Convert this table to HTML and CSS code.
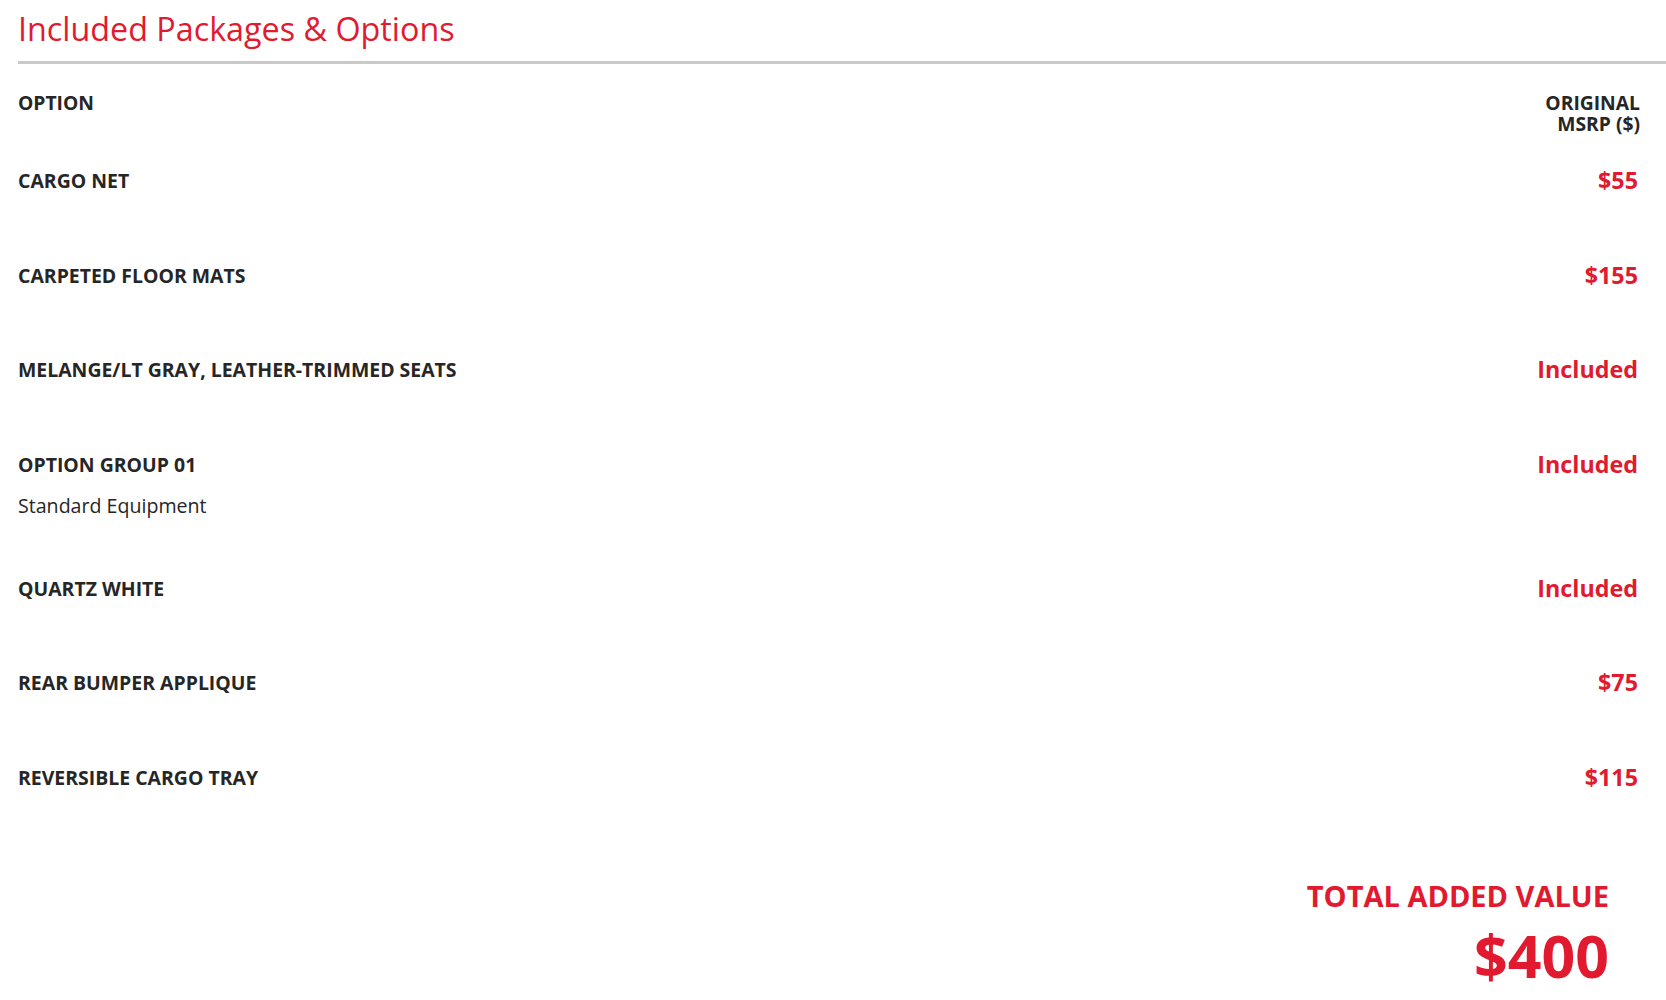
FILE: index.html
```html
<!DOCTYPE html>
<html lang="en">
<head>
<meta charset="utf-8">
<title>Included Packages &amp; Options</title>
<link rel="stylesheet" href="styles.css">
</head>
<body>
<div class="page">
  <h2 class="title">Included Packages &amp; Options</h2>
  <div class="rule"></div>
  <div class="table">
    <div class="head">
      <div class="head-option">OPTION</div>
      <div class="head-price">
        <div class="head-line">ORIGINAL</div>
        <div class="head-line">MSRP ($)</div>
      </div>
    </div>
    <div class="row">
      <div class="name">CARGO NET</div>
      <div class="price">$55</div>
    </div>
    <div class="row">
      <div class="name">CARPETED FLOOR MATS</div>
      <div class="price">$155</div>
    </div>
    <div class="row">
      <div class="name">MELANGE/LT GRAY, LEATHER-TRIMMED SEATS</div>
      <div class="price">Included</div>
    </div>
    <div class="row">
      <div class="name">OPTION GROUP 01
        <div class="desc">Standard Equipment</div>
      </div>
      <div class="price">Included</div>
    </div>
    <div class="row">
      <div class="name">QUARTZ WHITE</div>
      <div class="price">Included</div>
    </div>
    <div class="row">
      <div class="name">REAR BUMPER APPLIQUE</div>
      <div class="price">$75</div>
    </div>
    <div class="row">
      <div class="name">REVERSIBLE CARGO TRAY</div>
      <div class="price">$115</div>
    </div>
    <div class="total">
      <div class="total-label">TOTAL ADDED VALUE</div>
      <div class="total-value">$400</div>
    </div>
  </div>
</div>
</body>
</html>
```
FILE: styles.css
```css
html, body {
  margin: 0;
  padding: 0;
  background: #ffffff;
}
body {
  font-family: "Open Sans", "Liberation Sans", sans-serif;
  color: #262626;
}
.page {
  padding-left: 18px;
}
.title {
  margin: 8px 0 0 0;
  font-size: 32.3px;
  line-height: 40px;
  font-weight: 400;
  color: #e11a2f;
}
.rule {
  margin-top: 13px;
  height: 3px;
  background: #c9c9c9;
}
.table {
  margin-right: 26px;
}
.head {
  display: flex;
  justify-content: space-between;
  align-items: flex-start;
  padding-top: 28px;
  padding-bottom: 23px;
  font-size: 19.3px;
  line-height: 21px;
  font-weight: 700;
  color: #262626;
}
.head-price {
  text-align: right;
}
.head-line {
  height: 21px;
}
.row {
  display: flex;
  justify-content: space-between;
  align-items: flex-start;
  box-sizing: border-box;
  min-height: 94.5px;
  padding: 12px 0 47px 0;
}
.name {
  font-size: 19.45px;
  line-height: 24px;
  font-weight: 700;
  color: #262626;
}
.desc {
  margin-top: 17px;
  font-size: 19.6px;
  line-height: 24px;
  font-weight: 400;
  color: #262626;
}
.price {
  padding-right: 2px;
  font-size: 23.3px;
  line-height: 22px;
  font-weight: 700;
  color: #e11a2f;
}
.total {
  display: flex;
  flex-direction: column;
  align-items: flex-end;
  margin-right: 31px;
  padding-top: 30px;
  color: #e11a2f;
  font-weight: 700;
}
.total-label {
  font-size: 29px;
  line-height: 36px;
}
.total-value {
  margin-top: 9px;
  font-size: 59px;
  line-height: 64px;
}
```
